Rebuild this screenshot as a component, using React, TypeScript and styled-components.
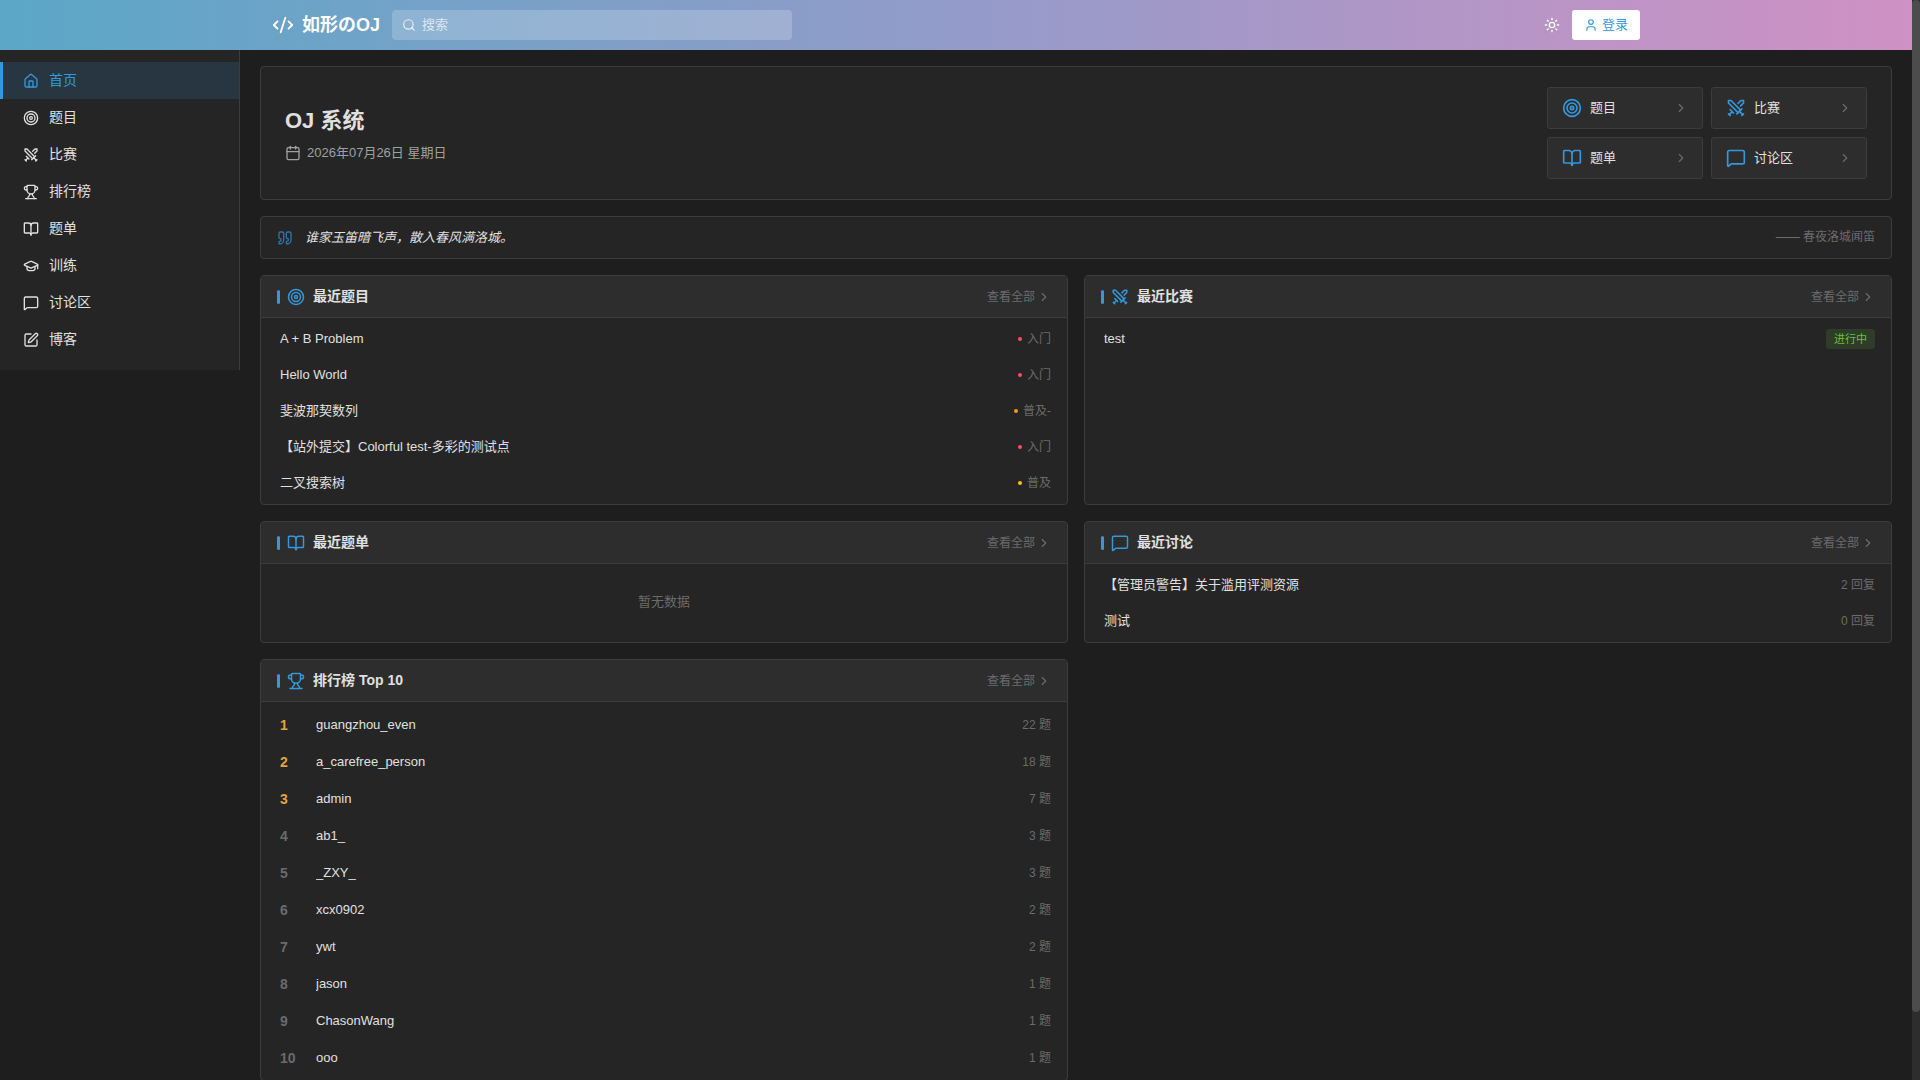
import React from 'react';
import styled, { createGlobalStyle, css } from 'styled-components';
import {
  BookOpen, Calendar, ChevronRight, CodeXml, GraduationCap, House, MessageSquare,
  Quote, Search, SquarePen, Sun, Swords, Target, Trophy, User, type LucideIcon,
} from 'lucide-react';

const color = {
  page: '#1e1e1e',
  card: '#252525',
  raised: '#2d2d2d',
  border: '#3c3c3c',
  text: '#e0e0e0',
  soft: '#a0a0a0',
  muted: '#6b6b6b',
  primary: '#3498db',
  gold: '#e6a23c',
};

const GlobalStyle = createGlobalStyle`
  *, *::before, *::after { box-sizing: border-box; }
  html, body { margin: 0; background: ${color.page}; }
  body {
    color: ${color.text};
    font-family: "Liberation Sans", "Noto Sans CJK SC", sans-serif;
    font-size: 13px;
    line-height: 20px;
  }
  a { color: inherit; text-decoration: none; }
  ul, ol { list-style: none; margin: 0; padding: 0; }
  h1, h2, p { margin: 0; }
  button, input { font: inherit; }
  svg { flex: none; }
`;

const Viewport = styled.div`
  display: flex;
  height: 100vh;
  overflow: hidden;
`;

const Page = styled.div`
  flex: 1;
  min-width: 0;
  overflow-y: auto;
  scrollbar-width: none;
`;

const ScrollTrack = styled.div`
  width: 8px;
  background: ${color.raised};
`;

const ScrollThumb = styled.div`
  border-radius: 4px;
  background: #4c4c4c;
`;

const Header = styled.header`
  height: 50px;
  padding: 0 16px;
  background: linear-gradient(90deg, #5ba7c7 0%, #939bc9 50%, #d091c4 100%);
`;

const HeaderInner = styled.div`
  display: flex;
  align-items: center;
  gap: 12px;
  height: 100%;
  max-width: 1368px;
  margin: 0 auto;
  color: #fff;
`;

const Brand = styled.a`
  display: flex;
  align-items: center;
  gap: 8px;
  font-size: 18px;
  font-weight: 700;
  line-height: 28px;
`;

const SearchBox = styled.label`
  display: flex;
  align-items: center;
  gap: 6px;
  width: 400px;
  height: 30px;
  padding: 0 10px;
  border-radius: 4px;
  background: rgba(255, 255, 255, 0.2);
  color: rgba(255, 255, 255, 0.8);
`;

const SearchInput = styled.input`
  flex: 1;
  min-width: 0;
  padding: 0;
  border: 0;
  outline: 0;
  background: transparent;
  color: #fff;
  &::placeholder { color: rgba(255, 255, 255, 0.7); }
`;

const HeaderActions = styled.div`
  display: flex;
  align-items: center;
  gap: 4px;
  margin-left: auto;
`;

const IconButton = styled.button`
  display: grid;
  place-items: center;
  width: 32px;
  height: 32px;
  padding: 0;
  border: 0;
  background: transparent;
  color: #fff;
`;

const LoginButton = styled.button`
  display: flex;
  align-items: center;
  gap: 4px;
  height: 30px;
  padding: 0 12px;
  border: 0;
  border-radius: 3px;
  background: #fff;
  color: ${color.primary};
`;

const Body = styled.div`
  display: flex;
  align-items: flex-start;
`;

const Sidebar = styled.nav`
  flex: none;
  width: 240px;
  padding: 12px 0;
  border-right: 1px solid ${color.border};
  background: ${color.card};
`;

const NavLink = styled.a<{ $active?: boolean }>`
  display: flex;
  align-items: center;
  gap: 10px;
  padding: 8px 20px;
  border-left: 3px solid transparent;
  font-size: 14px;
  line-height: 21px;
  ${(p) => p.$active && css`
    border-left-color: ${color.primary};
    background: rgba(52, 152, 219, 0.15);
    color: ${color.primary};
  `}
`;

const Main = styled.main`
  display: flex;
  flex: 1;
  flex-direction: column;
  gap: 16px;
  min-width: 0;
  padding: 16px 20px 72px;
`;

const Panel = styled.section`
  border: 1px solid ${color.border};
  border-radius: 4px;
  background: ${color.card};
  overflow: hidden;
`;

const Hero = styled(Panel)`
  display: flex;
  align-items: center;
  justify-content: space-between;
  padding: 20px 24px;
`;

const HeroTitle = styled.h1`
  margin-bottom: 4px;
  font-size: 22px;
  line-height: 36px;
`;

const HeroDate = styled.p`
  display: flex;
  align-items: center;
  gap: 6px;
  color: ${color.soft};
`;

const QuickGrid = styled.div`
  display: grid;
  grid-template-columns: repeat(2, 156px);
  gap: 8px;
`;

const QuickLink = styled.a`
  display: flex;
  align-items: center;
  gap: 8px;
  padding: 10px 14px;
  border: 1px solid ${color.border};
  border-radius: 3px;
  background: ${color.raised};
  svg:first-child { color: ${color.primary}; }
  svg:last-child { margin-left: auto; color: ${color.muted}; }
`;

const QuotePanel = styled(Panel)`
  display: flex;
  align-items: center;
  gap: 12px;
  padding: 10px 16px;
  line-height: 21px;
  svg { color: ${color.primary}; opacity: 0.7; }
`;

const QuoteText = styled.p`
  flex: 1;
  font-style: italic;
`;

const QuoteSource = styled.span`
  color: ${color.muted};
  font-size: 12px;
`;

const CardGrid = styled.div`
  display: grid;
  grid-template-columns: repeat(2, minmax(0, 1fr));
  gap: 16px;
`;

const CardHeader = styled.header`
  display: flex;
  align-items: center;
  justify-content: space-between;
  height: 42px;
  padding: 0 16px;
  border-bottom: 1px solid ${color.border};
  background: ${color.raised};
`;

const CardTitle = styled.h2`
  display: flex;
  align-items: center;
  gap: 7px;
  font-size: 14px;
  line-height: 21px;
  &::before {
    content: "";
    width: 3px;
    height: 14px;
    border-radius: 2px;
    background: ${color.primary};
  }
`;

const CardLabel = styled.span`
  display: flex;
  align-items: center;
  gap: 8px;
  svg { color: ${color.primary}; }
`;

const MoreLink = styled.a`
  display: flex;
  align-items: center;
  gap: 2px;
  color: ${color.muted};
  font-size: 12px;
`;

const List = styled.ul`
  padding: 3px 0;
`;

const Ranking = styled.ol`
  padding: 4px 0;
`;

const Row = styled.a<{ $height: number }>`
  display: flex;
  align-items: center;
  gap: 8px;
  height: ${(p) => p.$height}px;
  padding: 0 16px;
  border-left: 3px solid transparent;
`;

const RowName = styled.span`
  flex: 1;
  min-width: 0;
  overflow: hidden;
  text-overflow: ellipsis;
  white-space: nowrap;
`;

const Meta = styled.span`
  display: flex;
  align-items: center;
  gap: 5px;
  color: ${color.muted};
  font-size: 12px;
`;

const Dot = styled.i<{ $color: string }>`
  width: 4px;
  height: 4px;
  border-radius: 50%;
  background: ${(p) => p.$color};
`;

const Badge = styled.span`
  padding: 2px 8px;
  border-radius: 3px;
  background: rgba(103, 194, 58, 0.15);
  color: #67c23a;
  font-size: 11px;
  line-height: 16px;
`;

const Rank = styled.span<{ $top: boolean }>`
  width: 28px;
  color: ${(p) => (p.$top ? color.gold : color.muted)};
  font-size: 14px;
  font-weight: 700;
`;

const Empty = styled.p`
  padding: 28px 0 30px;
  color: ${color.muted};
  text-align: center;
`;

const navItems: [LucideIcon, string][] = [
  [House, '首页'], [Target, '题目'], [Swords, '比赛'], [Trophy, '排行榜'],
  [BookOpen, '题单'], [GraduationCap, '训练'], [MessageSquare, '讨论区'], [SquarePen, '博客'],
];

const quickItems: [LucideIcon, string][] = [
  [Target, '题目'], [Swords, '比赛'], [BookOpen, '题单'], [MessageSquare, '讨论区'],
];

const levels = { 入门: '#fe4c61', '普及-': '#f39c11', 普及: '#ffc116' };

const problems: { name: string; level: keyof typeof levels }[] = [
  { name: 'A + B Problem', level: '入门' },
  { name: 'Hello World', level: '入门' },
  { name: '斐波那契数列', level: '普及-' },
  { name: '【站外提交】Colorful test-多彩的测试点', level: '入门' },
  { name: '二叉搜索树', level: '普及' },
];

const discussions = [
  { name: '【管理员警告】关于滥用评测资源', replies: 2 },
  { name: '测试', replies: 0 },
];

const ranking: [string, number][] = [
  ['guangzhou_even', 22], ['a_carefree_person', 18], ['admin', 7], ['ab1_', 3], ['_ZXY_', 3],
  ['xcx0902', 2], ['ywt', 2], ['jason', 1], ['ChasonWang', 1], ['ooo', 1],
];

function Card({ icon: Icon, title, children }: { icon: LucideIcon; title: string; children: React.ReactNode }) {
  return (
    <Panel>
      <CardHeader>
        <CardTitle><CardLabel><Icon size={18} />{title}</CardLabel></CardTitle>
        <MoreLink href="#">查看全部<ChevronRight size={14} /></MoreLink>
      </CardHeader>
      {children}
    </Panel>
  );
}

function PageScrollbar({ target }: { target: React.RefObject<HTMLDivElement | null> }) {
  const [thumb, setThumb] = React.useState({ height: 0, top: 0 });
  React.useLayoutEffect(() => {
    const el = target.current;
    if (!el) return;
    const update = () => {
      const ratio = el.clientHeight / el.scrollHeight;
      setThumb({ height: Math.round(el.clientHeight * ratio), top: Math.round(el.scrollTop * ratio) });
    };
    update();
    el.addEventListener('scroll', update);
    window.addEventListener('resize', update);
    return () => {
      el.removeEventListener('scroll', update);
      window.removeEventListener('resize', update);
    };
  }, [target]);
  return (
    <ScrollTrack aria-hidden="true">
      <ScrollThumb style={{ height: thumb.height, transform: `translateY(${thumb.top}px)` }} />
    </ScrollTrack>
  );
}

export default function App() {
  const page = React.useRef<HTMLDivElement>(null);
  return (
    <Viewport>
      <GlobalStyle />
      <Page ref={page}>
        <Header>
          <HeaderInner>
            <Brand href="#"><CodeXml size={22} />如形のOJ</Brand>
            <SearchBox>
              <Search size={14} />
              <SearchInput type="text" placeholder="搜索" aria-label="搜索" />
            </SearchBox>
            <HeaderActions>
              <IconButton type="button" aria-label="切换主题"><Sun size={16} /></IconButton>
              <LoginButton type="button"><User size={14} />登录</LoginButton>
            </HeaderActions>
          </HeaderInner>
        </Header>
        <Body>
          <Sidebar>
            {navItems.map(([Icon, label], i) => (
              <NavLink key={label} href="#" $active={i === 0}><Icon size={16} />{label}</NavLink>
            ))}
          </Sidebar>
          <Main>
            <Hero>
              <div>
                <HeroTitle>OJ 系统</HeroTitle>
                <HeroDate><Calendar size={16} />2026年07月26日 星期日</HeroDate>
              </div>
              <QuickGrid>
                {quickItems.map(([Icon, label]) => (
                  <QuickLink key={label} href="#"><Icon size={20} />{label}<ChevronRight size={14} /></QuickLink>
                ))}
              </QuickGrid>
            </Hero>
            <QuotePanel>
              <Quote size={16} />
              <QuoteText>谁家玉笛暗飞声，散入春风满洛城。</QuoteText>
              <QuoteSource>—— 春夜洛城闻笛</QuoteSource>
            </QuotePanel>
            <CardGrid>
              <Card icon={Target} title="最近题目">
                <List>
                  {problems.map((p) => (
                    <li key={p.name}>
                      <Row href="#" $height={36}>
                        <RowName>{p.name}</RowName>
                        <Meta><Dot $color={levels[p.level]} />{p.level}</Meta>
                      </Row>
                    </li>
                  ))}
                </List>
              </Card>
              <Card icon={Swords} title="最近比赛">
                <List>
                  <li>
                    <Row href="#" $height={36}><RowName>test</RowName><Badge>进行中</Badge></Row>
                  </li>
                </List>
              </Card>
              <Card icon={BookOpen} title="最近题单">
                <Empty>暂无数据</Empty>
              </Card>
              <Card icon={MessageSquare} title="最近讨论">
                <List>
                  {discussions.map((d) => (
                    <li key={d.name}>
                      <Row href="#" $height={36}>
                        <RowName>{d.name}</RowName>
                        <Meta>{d.replies} 回复</Meta>
                      </Row>
                    </li>
                  ))}
                </List>
              </Card>
              <Card icon={Trophy} title="排行榜 Top 10">
                <Ranking>
                  {ranking.map(([name, solved], i) => (
                    <li key={name}>
                      <Row href="#" $height={37}>
                        <Rank $top={i < 3}>{i + 1}</Rank>
                        <RowName>{name}</RowName>
                        <Meta>{solved} 题</Meta>
                      </Row>
                    </li>
                  ))}
                </Ranking>
              </Card>
            </CardGrid>
          </Main>
        </Body>
      </Page>
      <PageScrollbar target={page} />
    </Viewport>
  );
}
